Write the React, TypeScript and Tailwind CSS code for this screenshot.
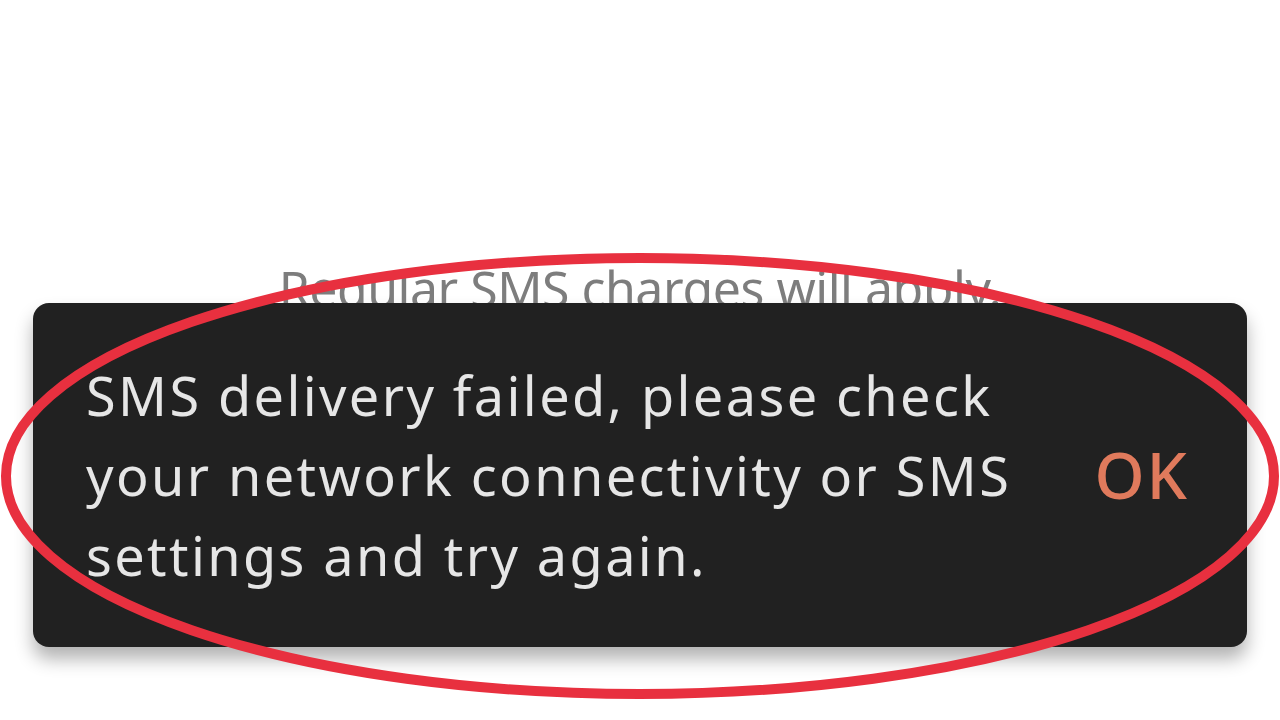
export default function App() {
  return (
    <div className="relative h-[720px] w-[1280px] overflow-hidden bg-white font-['Noto_Sans',sans-serif]">
      <div className="flex h-[303px] items-start justify-center overflow-hidden pt-[258px]">
        <p className="whitespace-nowrap text-[50px] leading-[60px] tracking-[-0.5px] text-[#7d7d7d]">
          Regular SMS charges will apply.
        </p>
      </div>

      <div className="mx-[33px] flex items-center rounded-[16px] bg-[#212121] py-[52px] pl-[53px] pr-[58px] shadow-[0_12px_18px_rgba(0,0,0,0.3)]">
        <p className="flex-1 whitespace-nowrap text-[54px] leading-[80px] tracking-[2.4px] text-[#e6e6e6]">
          SMS delivery failed, please check
          <br />
          your network connectivity or SMS
          <br />
          settings and try again.
        </p>
        <span className="text-[64px] font-medium leading-none tracking-[2px] text-[#e07a5c]">OK</span>
      </div>

      <svg className="pointer-events-none absolute inset-0" width="1280" height="720" viewBox="0 0 1280 720">
        <ellipse cx="640" cy="476" rx="634" ry="218" fill="none" stroke="#e8303f" strokeWidth="10" />
      </svg>
    </div>
  )
}
